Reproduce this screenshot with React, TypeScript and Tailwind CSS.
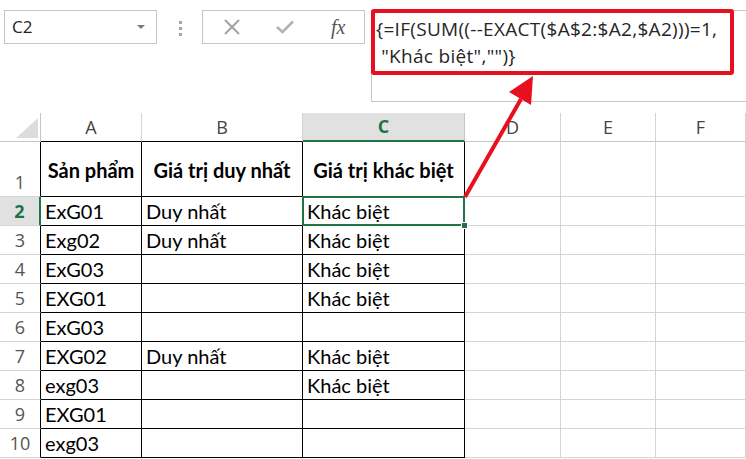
import React from 'react';

const rows: [string, string, string][] = [
  ['ExG01', 'Duy nhất', 'Khác biệt'],
  ['Exg02', 'Duy nhất', 'Khác biệt'],
  ['ExG03', '', 'Khác biệt'],
  ['EXG01', '', 'Khác biệt'],
  ['ExG03', '', ''],
  ['EXG02', 'Duy nhất', 'Khác biệt'],
  ['exg03', '', 'Khác biệt'],
  ['EXG01', '', ''],
  ['exg03', '', ''],
];

const cellFont = { fontFamily: 'Lato, "Noto Sans", sans-serif' };
const uiFont = { fontFamily: '"Open Sans", "Noto Sans", sans-serif' };

function FormulaBar() {
  return (
    <div className="flex h-[113px] items-start bg-white" style={uiFont}>
      <div className="ml-[4px] mt-[10px] flex h-[34px] w-[153px] items-center justify-between border border-[#c6c6c6] pl-[7px] pr-[11px]">
        <span className="text-[17px] text-[#222]">C2</span>
        <span className="h-0 w-0 border-x-[4px] border-t-[4px] border-x-transparent border-t-[#7a7a7a]" />
      </div>
      <div className="ml-[22px] mt-[21px] flex flex-col gap-[3px]">
        <span className="h-[3px] w-[3px] bg-[#a6a6a6]" />
        <span className="h-[3px] w-[3px] bg-[#a6a6a6]" />
        <span className="h-[3px] w-[3px] bg-[#a6a6a6]" />
      </div>
      <div className="ml-[20px] mt-[10px] flex h-[34px] w-[163px] items-center border border-[#c6c6c6]">
        <svg className="ml-[21px]" width="16" height="16" viewBox="0 0 16 16">
          <path d="M1 1 L15 15 M15 1 L1 15" stroke="#a3a3a3" strokeWidth="2" fill="none" />
        </svg>
        <svg className="ml-[36px]" width="18" height="14" viewBox="0 0 18 14">
          <path d="M1 7 L6.5 12 L17 1.5" stroke="#b3b3b3" strokeWidth="2.6" fill="none" />
        </svg>
        <span
          className="ml-[37px] text-[20px] italic text-[#555]"
          style={{ fontFamily: '"Liberation Serif", serif' }}
        >
          fx
        </span>
      </div>
      <div className="ml-[6px] mt-[10px] h-[92px] flex-1 border-l border-t border-b border-[#c6c6c6]">
        <div className="-ml-[1px] -mt-[2px] h-[66px] w-[363px] rounded-[3px] border-[4px] border-[#e8101f] pl-[1px] pt-[3px] text-[19px] leading-[27px] tracking-[0.3px] text-[#262626]">
          <div className="whitespace-pre">{'{=IF(SUM((--EXACT($A$2:$A2,$A2)))=1,'}</div>
          <div className="whitespace-pre">{' "Khác biệt","")}'}</div>
        </div>
      </div>
    </div>
  );
}

function ColHeader({ label, active, table }: { label: string; active?: boolean; table?: boolean }) {
  return (
    <div
      className={
        'flex items-center justify-center border-r text-[18px] ' +
        (active
          ? 'border-b-2 border-r-[#c6c6c6] border-b-[#217346] bg-[#e1e1e1] font-bold text-[#217346]'
          : table
            ? 'border-b border-r-[#d4d4d4] border-b-black text-[#444]'
            : 'border-b border-r-[#d4d4d4] border-b-[#c6c6c6] text-[#444]')
      }
      style={uiFont}
    >
      {label}
    </div>
  );
}

function RowHeader({ n, active }: { n: number; active?: boolean }) {
  return (
    <div
      className={
        'flex items-end justify-center border-b border-b-[#d4d4d4] pb-[2px] text-[18px] leading-[24px] ' +
        (active
          ? 'border-r-2 border-r-[#217346] bg-[#e1e1e1] font-bold text-[#217346]'
          : 'border-r border-r-black text-[#555]')
      }
      style={uiFont}
    >
      {n}
    </div>
  );
}

function Cell({ text }: { text: string }) {
  return (
    <div className="flex items-center border-b border-r border-black pl-[4px] text-[20px] text-black" style={cellFont}>
      {text}
    </div>
  );
}

function Blank() {
  return <div className="border-b border-r border-[#d4d4d4]" />;
}

export default function App() {
  return (
    <div className="relative h-[459px] w-[746px] overflow-hidden bg-white">
      <FormulaBar />
      <div className="grid grid-cols-[41px_101px_161px_162px_96px_95px_90px] grid-rows-[29px_55px_repeat(9,29px)]">
        <div className="relative border-b border-r border-[#c6c6c6]">
          <svg className="absolute left-[16px] top-[5px]" width="22" height="20" viewBox="0 0 22 20">
            <polygon points="0,20 22,20 22,0" fill="#dcdcdc" />
          </svg>
        </div>
        <ColHeader label="A" table />
        <ColHeader label="B" table />
        <ColHeader label="C" active />
        <ColHeader label="D" />
        <ColHeader label="E" />
        <ColHeader label="F" />

        <RowHeader n={1} />
        {['Sản phẩm', 'Giá trị duy nhất', 'Giá trị khác biệt'].map((h) => (
          <div
            key={h}
            className="flex items-center justify-center border-b border-r border-black pt-[2px] text-[20px] font-bold text-black"
            style={cellFont}
          >
            {h}
          </div>
        ))}
        <Blank />
        <Blank />
        <Blank />

        {rows.map((r, i) => (
          <React.Fragment key={i}>
            <RowHeader n={i + 2} active={i === 0} />
            <Cell text={r[0]} />
            <Cell text={r[1]} />
            {i === 0 ? (
              <div
                className="relative flex items-center border-b border-r border-black pl-[4px] text-[20px] text-black"
                style={cellFont}
              >
                {r[2]}
                <div className="absolute -left-[1px] -top-[1px] h-[30px] w-[163px] border-2 border-[#217346]" />
                <div className="absolute -bottom-[4px] -right-[4px] h-[7px] w-[7px] border border-white bg-[#217346]" />
              </div>
            ) : (
              <Cell text={r[2]} />
            )}
            <Blank />
            <Blank />
            <Blank />
          </React.Fragment>
        ))}
      </div>
      <svg className="pointer-events-none absolute left-0 top-0" width="746" height="459">
        <line x1="465" y1="197" x2="521" y2="99" stroke="#e8101f" strokeWidth="4" />
        <polygon points="533,76 531,105 509,92" fill="#e8101f" />
      </svg>
    </div>
  );
}
